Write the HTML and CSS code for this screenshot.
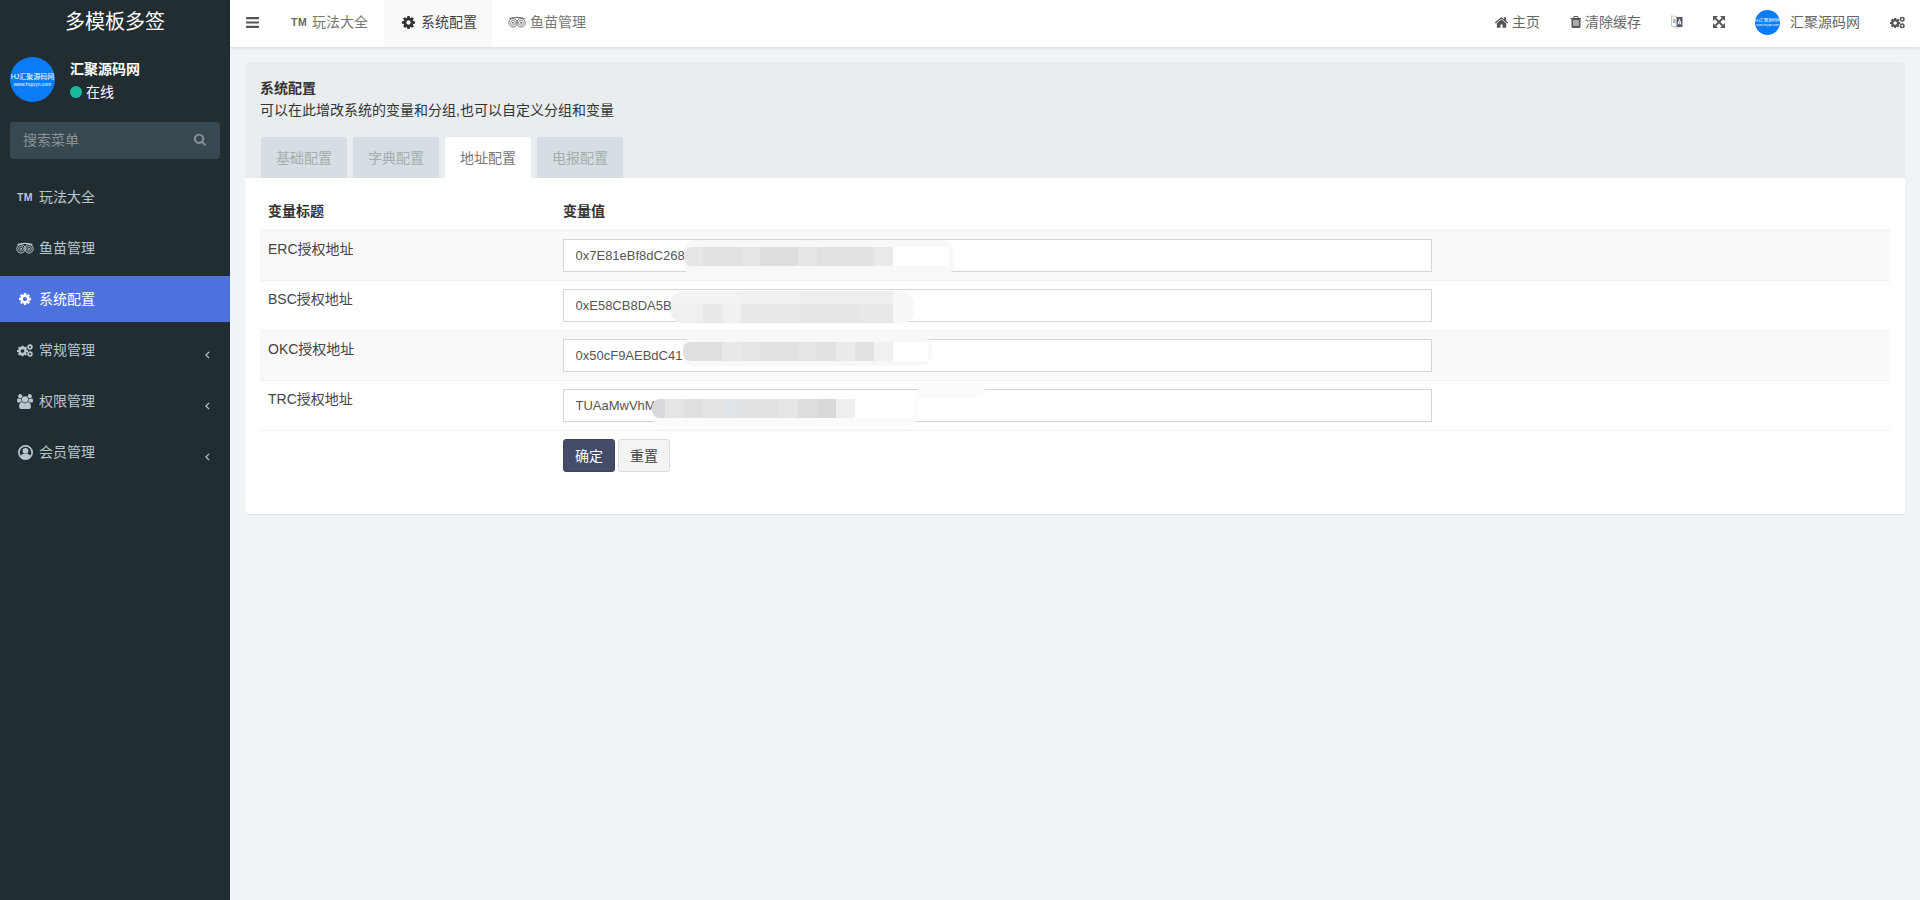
FILE: index.html
```html
<!DOCTYPE html>
<html lang="zh-CN">
<head>
<meta charset="utf-8">
<title>系统配置</title>
<link rel="stylesheet" href="styles.css">
</head>
<body>
<svg class="defs" width="0" height="0" aria-hidden="true">
  <symbol id="i-bars" viewBox="128 256 1536 1280"><path d="M1664 1344v128q0 26-19 45t-45 19h-1408q-26 0-45-19t-19-45v-128q0-26 19-45t45-19h1408q26 0 45 19t19 45zm0-512v128q0 26-19 45t-45 19h-1408q-26 0-45-19t-19-45v-128q0-26 19-45t45-19h1408q26 0 45 19t19 45zm0-512v128q0 26-19 45t-45 19h-1408q-26 0-45-19t-19-45v-128q0-26 19-45t45-19h1408q26 0 45 19t19 45z"/></symbol>
  <symbol id="i-cog" viewBox="128 128 1536 1536"><path d="M1152 896q0-106-75-181t-181-75-181 75-75 181 75 181 181 75 181-75 75-181zm512-109v222q0 12-8 23t-20 13l-185 28q-19 54-39 91 35 50 107 138 10 12 10 25t-9 23q-27 37-99 108t-94 71q-12 0-26-9l-138-108q-44 23-91 38-16 136-29 186-7 28-36 28h-222q-14 0-24.5-8.5t-11.5-21.5l-28-184q-49-16-90-37l-141 107q-10 9-25 9-14 0-25-11-126-114-165-168-7-10-7-23 0-12 8-23 15-21 51-66.5t54-70.5q-27-50-41-99l-183-27q-13-2-21-12.5t-8-23.5v-222q0-12 8-23t19-13l186-28q14-46 39-92-40-57-107-138-10-12-10-24 0-10 9-23 26-36 98.5-107.5t94.5-71.5q13 0 26 10l138 107q44-23 91-38 16-136 29-186 7-28 36-28h222q14 0 24.5 8.5t11.5 21.5l28 184q49 16 90 37l142-107q9-9 24-9 13 0 25 10 129 119 165 170 7 8 7 22 0 12-8 23-15 21-51 66.5t-54 70.5q26 50 41 98l183 28q13 2 21 12.5t8 23.5z"/></symbol>
  <symbol id="i-cogs" viewBox="0 0 16 13">
    <use href="#i-cog" x="0" y="1.500" width="11" height="11"/>
    <use href="#i-cog" x="10" y="0" width="6" height="6"/>
    <use href="#i-cog" x="10" y="7" width="6" height="6"/>
  </symbol>
  <symbol id="i-home" viewBox="96 256 1600 1280"><path d="M1472 992v480q0 26-19 45t-45 19h-384v-384h-256v384h-384q-26 0-45-19t-19-45v-480q0-1 .5-3t.5-3l575-474 575 474q1 2 1 6zm223-69l-62 74q-8 9-21 11h-3q-13 0-21-7l-692-577-692 577q-12 8-24 7-13-2-21-11l-62-74q-8-10-7-23.5t11-21.5l719-599q32-26 76-26t76 26l244 204v-195q0-14 9-23t23-9h192q14 0 23 9t9 23v408l219 182q10 8 11 21.5t-7 23.5z"/></symbol>
  <symbol id="i-trash" viewBox="128 128 1408 1536"><path d="M704 1376v-704q0-14-9-23t-23-9h-64q-14 0-23 9t-9 23v704q0 14 9 23t23 9h64q14 0 23-9t9-23zm256 0v-704q0-14-9-23t-23-9h-64q-14 0-23 9t-9 23v704q0 14 9 23t23 9h64q14 0 23-9t9-23zm256 0v-704q0-14-9-23t-23-9h-64q-14 0-23 9t-9 23v704q0 14 9 23t23 9h64q14 0 23-9t9-23zm-544-992h448l-48-117q-7-9-17-11h-317q-10 2-17 11zm928 32v64q0 14-9 23t-23 9h-96v948q0 83-47 143.5t-113 60.5h-832q-66 0-113-58.5t-47-141.5v-952h-96q-14 0-23-9t-9-23v-64q0-14 9-23t23-9h309l70-167q15-37 54-63t79-26h320q40 0 79 26t54 63l70 167h309q14 0 23 9t9 23z"/></symbol>
  <symbol id="i-search" viewBox="64 64 1664 1728"><path d="M1216 832q0-185-131.5-316.5t-316.5-131.5-316.5 131.5-131.5 316.5 131.5 316.5 316.5 131.5 316.5-131.5 131.5-316.5zm512 832q0 52-38 90t-90 38q-54 0-90-38l-343-342q-179 124-399 124-143 0-273.5-55.5t-225-150-150-225-55.5-273.5 55.5-273.5 150-225 225-150 273.5-55.5 273.5 55.5 225 150 150 225 55.5 273.5q0 220-124 399l343 343q37 37 37 90z"/></symbol>
  <symbol id="i-users" viewBox="0 0 1920 1792"><path d="M593 896q-162 5-265 128h-134q-82 0-138-40.500t-56-118.500q0-353 124-353 6 0 43.500 21t97.500 42.500 119 21.500q67 0 133-23-5 37-5 66 0 139 81 256zm1071 637q0 120-73 189.500t-194 69.500h-874q-121 0-194-69.500t-73-189.500q0-53 3.500-103.500t14-109 26.500-108.500 43-97.500 62-81 85.500-53.500 111.500-20q10 0 43 21.500t73 48 107 48 135 21.500 135-21.500 107-48 73-48 43-21.500q61 0 111.500 20t85.500 53.500 62 81 43 97.500 26.500 108.500 14 109 3.500 103.500zm-1024-1277q0 106-75 181t-181 75-181-75-75-181 75-181 181-75 181 75 75 181zm704 384q0 159-112.500 271.500t-271.500 112.500-271.500-112.500-112.500-271.500 112.500-271.500 271.500-112.500 271.500 112.500 112.500 271.500zm576 225q0 78-56 118.500t-138 40.500h-134q-103-123-265-128 81-117 81-256 0-29-5-66 66 23 133 23 59 0 119-21.500t97.500-42.500 43.500-21q124 0 124 353zm-128-609q0 106-75 181t-181 75-181-75-75-181 75-181 181-75 181 75 75 181z"/></symbol>
  <symbol id="i-user" viewBox="0 0 16 16"><path fill-rule="evenodd" d="M8 0a8 8 0 1 1 0 16A8 8 0 0 1 8 0zm0 1.800a6.200 6.200 0 0 0-5.100 9.700C3.800 10.200 5 9.400 6.100 9.400h3.800c1.100 0 2.300.8 3.200 2.100A6.200 6.200 0 0 0 8 1.800z"/><circle cx="8" cy="6.200" r="3.100"/></symbol>
  <symbol id="i-trip" viewBox="0 0 18 12">
    <g fill="none" stroke="currentColor">
      <path stroke-width="1.200" d="M1.500 3C4 .8 14 .8 16.500 3"/>
      <circle cx="5" cy="6.800" r="4.200" stroke-width="1"/>
      <circle cx="13" cy="6.800" r="4.200" stroke-width="1"/>
      <circle cx="5" cy="6.800" r="2.400" stroke-width=".8"/>
      <circle cx="13" cy="6.800" r="2.400" stroke-width=".8"/>
    </g>
    <circle cx="5" cy="6.800" r="1" fill="currentColor"/>
    <circle cx="13" cy="6.800" r="1" fill="currentColor"/>
  </symbol>
  <symbol id="i-expand" viewBox="0 0 12 12">
    <path fill="none" stroke="currentColor" stroke-width="1.800" d="M2.500 2.500l7 7M9.500 2.500l-7 7"/>
    <path d="M0 0h5L0 5zM12 0v5L7 0zM0 12V7l5 5zM12 12H7l5-5z"/>
  </symbol>
  <symbol id="i-lang" viewBox="0 0 12 14">
    <path fill="#fff" stroke="#c9b9a0" stroke-width=".8" d="M.5 .8l6 1v10l-6-1z"/>
    <path fill="#fff" stroke="#c9b9a0" stroke-width=".6" d="M3 12.300l4 1.200 1.500-1.500"/>
    <path fill="#555b66" d="M5.500 2h6v10h-6z"/>
    <path fill="none" stroke="#fff" stroke-width="1" d="M7 9.500l1.500-5 1.500 5M7.500 8h2"/>
    <path fill="none" stroke="#8894a8" stroke-width=".9" d="M1.700 5h3M3.200 4v1.200M2 8c1.300-.8 2-2 2.200-3M2.300 6c.5 1 1.200 1.600 2.400 2"/>
  </symbol>
  <symbol id="i-left" viewBox="0 0 6 10"><path fill="none" stroke="currentColor" stroke-width="1.500" d="M5 1L1 5l4 4"/></symbol>
</svg>

<aside class="sidebar">
  <div class="brand">多模板多签</div>
  <div class="user-panel">
    <div class="logo logo-lg"><b>HJ汇聚源码网</b><span>www.hujuyn.com</span></div>
    <div class="user-info">
      <div class="user-name">汇聚源码网</div>
      <div class="user-status"><i class="dot"></i>在线</div>
    </div>
  </div>
  <div class="search"><span>搜索菜单</span><svg class="ic-search"><use href="#i-search"/></svg></div>
  <ul class="menu">
    <li class="item"><span class="ico"><span class="tm">TM</span></span><span>玩法大全</span></li>
    <li class="item"><span class="ico"><svg class="ic-trip"><use href="#i-trip"/></svg></span><span>鱼苗管理</span></li>
    <li class="item active"><span class="ico"><svg class="ic-12"><use href="#i-cog"/></svg></span><span>系统配置</span></li>
    <li class="item"><span class="ico"><svg class="ic-cogs"><use href="#i-cogs"/></svg></span><span>常规管理</span><svg class="chev"><use href="#i-left"/></svg></li>
    <li class="item"><span class="ico"><svg class="ic-users"><use href="#i-users"/></svg></span><span>权限管理</span><svg class="chev"><use href="#i-left"/></svg></li>
    <li class="item"><span class="ico"><svg class="ic-15"><use href="#i-user"/></svg></span><span>会员管理</span><svg class="chev"><use href="#i-left"/></svg></li>
  </ul>
</aside>

<div class="main">
  <header class="topbar">
    <a class="toggle"><svg class="ic-bars"><use href="#i-bars"/></svg></a>
    <a class="tab"><span class="tm tm-dark">TM</span><span>玩法大全</span></a>
    <a class="tab current"><svg class="ic-cog-top"><use href="#i-cog"/></svg><span>系统配置</span></a>
    <a class="tab tab-trip"><svg class="ic-trip"><use href="#i-trip"/></svg><span>鱼苗管理</span></a>
    <div class="top-right">
      <a class="top-item"><svg class="ic-home"><use href="#i-home"/></svg><span>主页</span></a>
      <a class="top-item"><svg class="ic-trash"><use href="#i-trash"/></svg><span>清除缓存</span></a>
      <a class="top-item"><svg class="ic-lang"><use href="#i-lang"/></svg></a>
      <a class="top-item"><svg class="ic-expand"><use href="#i-expand"/></svg></a>
      <a class="top-item top-user"><div class="logo logo-sm"><b>HJ汇聚源码网</b><span>www.hujuyn.com</span></div><span>汇聚源码网</span></a>
      <a class="top-item"><svg class="ic-gears"><use href="#i-cogs"/></svg></a>
    </div>
  </header>

  <section class="content">
    <div class="panel">
      <div class="panel-head">
        <div class="panel-title">系统配置</div>
        <div class="panel-sub">可以在此增改系统的变量和分组,也可以自定义分组和变量</div>
        <ul class="tabs">
          <li class="ptab">基础配置</li>
          <li class="ptab">字典配置</li>
          <li class="ptab on">地址配置</li>
          <li class="ptab">电报配置</li>
        </ul>
      </div>
      <div class="panel-body">
        <table class="grid">
          <thead>
            <tr><th class="col-a">变量标题</th><th>变量值</th></tr>
          </thead>
          <tbody>
            <tr class="odd">
              <td>ERC授权地址</td>
              <td><div class="field"><input class="input" value="0x7E81eBf8dC268">
                <div class="smear s1"><div class="mos m1"></div></div></div></td>
            </tr>
            <tr>
              <td>BSC授权地址</td>
              <td><div class="field"><input class="input" value="0xE58CB8DA5B">
                <div class="smear s2"><div class="mos m2"></div></div></div></td>
            </tr>
            <tr class="odd">
              <td>OKC授权地址</td>
              <td><div class="field"><input class="input" value="0x50cF9AEBdC41">
                <div class="smear s3"><div class="mos m3"></div></div></div></td>
            </tr>
            <tr>
              <td>TRC授权地址</td>
              <td><div class="field"><input class="input" value="TUAaMwVhM">
                <div class="smear s4b"></div>
                <div class="smear s4"><div class="mos m4"></div></div></div></td>
            </tr>
            <tr>
              <td></td>
              <td class="actions"><button class="btn primary">确定</button><button class="btn plain">重置</button></td>
            </tr>
          </tbody>
        </table>
      </div>
    </div>
  </section>
</div>
</body>
</html>
```
FILE: styles.css
```css
* { box-sizing: border-box; }
html, body { margin: 0; height: 100%; }
body {
  display: flex;
  height: 900px;
  overflow: hidden;
  background: #f1f4f6;
  font-family: "Liberation Sans", "Noto Sans CJK SC", sans-serif;
  font-size: 14px;
  line-height: 20px;
  color: #444;
}
.defs { position: absolute; }
svg { display: block; fill: currentColor; flex: none; }
ul { list-style: none; margin: 0; padding: 0; }

/* sidebar */
.sidebar { width: 230px; flex: none; background: #222d32; color: #b8c7ce; }
.brand { height: 47px; padding-bottom: 3px; display: flex; align-items: center; justify-content: center; font-size: 20px; color: #fff; }
.user-panel { display: flex; padding: 10px; height: 65px; }
.logo { border-radius: 50%; background: #0a7cf6; color: #fff; display: flex; flex-direction: column; align-items: center; justify-content: center; flex: none; overflow: hidden; white-space: nowrap; }
.logo b { font-weight: 400; }
.logo-lg { width: 45px; height: 45px; }
.logo-lg b { font-size: 7px; line-height: 9px; }
.logo-lg span { font-size: 5px; line-height: 6px; }
.logo-sm { width: 25px; height: 25px; }
.logo-sm b { font-size: 4px; line-height: 5px; }
.logo-sm span { font-size: 3px; line-height: 4px; }
.user-info { margin-left: 15px; color: #fff; }
.user-name { font-weight: 700; line-height: 20px; margin-top: 2px; }
.user-status { display: flex; align-items: center; line-height: 20px; margin-top: 3px; }
.dot { width: 12px; height: 12px; border-radius: 50%; background: #18bc9c; margin-right: 4px; }
.search { margin: 10px 10px 0; height: 37px; border-radius: 3px; background: #374850; padding: 0 14px 2px 13px; display: flex; align-items: center; justify-content: space-between; color: #8b9296; }
.ic-search { width: 12px; height: 13px; }
.menu { margin-top: 15px; display: flex; flex-direction: column; gap: 5px; }
.item { height: 46px; display: flex; align-items: center; padding-left: 17px; }
.item.active { background: #4d72de; color: #fff; }
.ico { width: 16px; margin-right: 6px; display: flex; justify-content: center; color: #b8c7ce; flex: none; }
.active .ico { color: #fff; }
.tm { font-weight: 700; font-size: 10.5px; letter-spacing: .5px; line-height: 12px; }
.ic-trip { width: 18px; height: 12px; }
.ic-12 { width: 12px; height: 12px; }
.ic-15 { width: 15px; height: 15px; }
.ic-cogs { width: 16px; height: 13px; }
.ic-users { width: 16px; height: 15px; }
.chev { width: 5px; height: 8px; margin: 9px 20px 0 auto; }

/* top bar */
.main { flex: 1; min-width: 0; display: flex; flex-direction: column; }
.topbar { height: 47px; flex: none; background: #fff; display: flex; align-items: stretch; box-shadow: 0 1px 3px rgba(0,0,0,.12); color: #777; }
.toggle { width: 43px; padding: 0 0 3px 16px; display: flex; align-items: center; color: #555; }
.ic-bars { width: 13px; height: 11px; }
.tab { display: flex; align-items: center; padding: 0 16px 3px 18px; gap: 5px; }
.tm-dark { color: #666; width: 16px; }
.tab.current { background: #f9f9f9; color: #444; gap: 6px; padding-right: 15px; }
.ic-cog-top { width: 13px; height: 13px; color: #333; }
.tab-trip { padding-left: 16px; gap: 4px; }
.top-right { margin-left: auto; display: flex; color: #666; }
.top-item { display: flex; align-items: center; padding: 0 15px 3px; gap: 4px; }
.top-user { gap: 10px; }
.ic-home { width: 13px; height: 11px; color: #555; }
.ic-trash { width: 11px; height: 12px; color: #555; }
.ic-lang { width: 12px; height: 14px; }
.ic-expand { width: 12px; height: 12px; color: #555; }
.ic-gears { width: 15px; height: 13px; color: #555; }

/* panel */
.content { padding: 15px; }
.panel { background: #fff; border-radius: 3px; box-shadow: 0 1px 1px rgba(0,0,0,.08); }
.panel-head { height: 116px; background: #e8edf0; padding: 16px 15px 0; border-radius: 3px 3px 0 0; }
.panel-title { font-weight: 700; color: #333; line-height: 20px; }
.panel-sub { color: #333; line-height: 20px; margin-top: 2px; }
.tabs { display: flex; gap: 6px; margin: 17px 0 0 1px; }
.ptab { width: 86px; height: 41px; display: flex; align-items: center; justify-content: center; background: #d6dde3; color: #a3afae; border-radius: 3px 3px 0 0; }
.ptab.on { background: #fff; color: #777; }
.panel-body { padding: 15px 15px 33px; }

/* table */
.grid { width: 100%; border-collapse: collapse; table-layout: fixed; color: #444; }
.grid th { text-align: left; padding: 8px 8px 9px; font-weight: 700; color: #333; line-height: 20px; font-size: 14px; }
.col-a { width: 295px; }
.grid td { padding: 8px; border-top: 1px solid #f1f1f1; vertical-align: top; line-height: 20px; }
.grid tr.odd td { background: #f9f9f9; }
.field { position: relative; width: 869px; height: 33px; }
.input { display: block; width: 100%; height: 33px; border: 1px solid #d2d6de; background: #fff; padding: 0 11.500px; font: 13px/20px "Liberation Sans", sans-serif; color: #555; border-radius: 0; outline: 0; }
.actions { height: 50px; }
.btn { height: 33px; width: 52px; padding: 0; border-radius: 3px; font: 14px/20px "Liberation Sans", "Noto Sans CJK SC", sans-serif; cursor: pointer; }
.primary { background: #444c69; border: 1px solid #3c4460; color: #fff; }
.plain { background: #f4f4f4; border: 1px solid #ddd; color: #444; margin-left: 3px; }

/* redaction smears over the address values */
.smear { position: absolute; background: #f7f8f8; border-radius: 12px; }
.mos { position: absolute; left: 0; }
.s1 { left: 121px; top: 1px; width: 270px; height: 36px; }
.m1 { top: 7px; height: 19px; width: 265px; background: linear-gradient(90deg, #e6e6e6 0 19px, #e1e1e1 19px 57px, #e5e5e5 57px 76px, #dcdedd 76px 114px, #e6e6e6 114px 133px, #e2e2e2 133px 190px, #eaeaea 190px 209px, #fff 209px); border-radius: 8px 0 0 8px; }
.s2 { left: 108px; top: 2px; width: 243px; height: 33px; border-radius: 14px; }
.m2 { top: 0; height: 32px; width: 222px; border-radius: 12px 0 0 12px; background: linear-gradient(#0000 0 13px, #0000 13px), linear-gradient(90deg, #f3f3f3 0 70px, #f1f1f1 70px 130px, #eeeeee 130px) top/100% 13px no-repeat, linear-gradient(90deg, #f0f0f0 0 32px, #e9e9e9 32px 52px, #f1f1f1 52px 70px, #e7e8e8 70px 130px, #e6e6e6 130px 190px, #e9e9e9 190px) bottom/100% 19px no-repeat; }
.s3 { left: 120px; top: -3px; width: 249px; height: 30px; }
.m3 { top: 6px; height: 19px; width: 245px; background: linear-gradient(90deg, #dfdfdf 0 39px, #e8e8e8 39px 59px, #e5e5e5 59px 77px, #e1e1df 77px 115px, #e5e5e5 115px 134px, #e2e2e2 134px 153px, #ebebeb 153px 172px, #e2e2e2 172px 191px, #f0f0f0 191px 210px, #fff 210px); border-radius: 8px 0 0 8px; }
.s4 { left: 89px; top: 10px; width: 265px; height: 27px; background: #fbfbfb; border-radius: 10px; }
.m4 { top: 0; height: 19px; width: 262px; background: linear-gradient(90deg, #d9d8dd 0 13px, #e5e5e5 13px 32px, #e0e0e0 32px 51px, #e5e4e2 51px 70px, #e1e4e7 70px 89px, #e2e2e2 89px 127px, #e6e6e6 127px 146px, #dedede 146px 165px, #d9d9d9 165px 184px, #efefef 184px 203px, #fff 203px); border-radius: 8px 0 0 8px; }
.s4b { left: 354px; top: -5px; width: 68px; height: 14px; background: #fbfbfb; border-radius: 10px 8px 8px 0; }
```
